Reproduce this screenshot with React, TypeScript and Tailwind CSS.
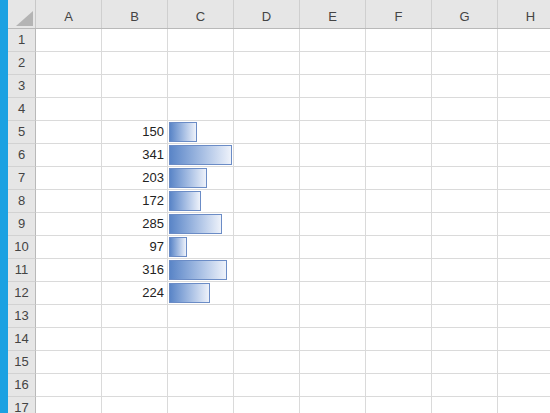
const cols = ['A', 'B', 'C', 'D', 'E', 'F', 'G', 'H']
const rows = Array.from({ length: 17 }, (_, i) => i + 1)

// values in column B, shown again as data bars in column C
const data: Record<number, number> = {
  5: 150,
  6: 341,
  7: 203,
  8: 172,
  9: 285,
  10: 97,
  11: 316,
  12: 224,
}
const max = 341

const font = { fontFamily: '"Liberation Sans", Arial, sans-serif' }

const DataBar = ({ value }: { value: number }) => (
  <div
    className="ml-[1px] h-[20px] border border-[#6b8cc6] bg-gradient-to-r from-[#5a85c7] to-[#eef2fa]"
    style={{ width: `${Math.round((value / max) * 63)}px` }}
  />
)

const App = () => {
  return (
    <div
      className="flex w-[550px] h-[413px] overflow-hidden bg-white text-[#333]"
      style={font}
    >
      <div className="w-[8px] shrink-0 bg-[#1ba1e2]" />

      <div className="flex flex-col shrink-0">
        <div className="flex h-[29px] shrink-0 bg-[#e6e6e6] border-b border-[#b9b9b9]">
          <div className="relative w-[28px] shrink-0 border-r border-[#c8c8c8]">
            <div className="absolute right-[2px] bottom-[2px] w-0 h-0 border-l-[17px] border-l-transparent border-b-[15px] border-b-[#b4b4b4]" />
          </div>
          {cols.map((c) => (
            <div
              key={c}
              className="w-[66px] shrink-0 flex items-end justify-center pb-[5px] text-[13px] leading-none text-[#444] border-r border-[#cfcfcf]"
            >
              {c}
            </div>
          ))}
        </div>

        {rows.map((r) => (
          <div key={r} className="flex h-[23px] shrink-0">
            <div className="w-[28px] shrink-0 flex items-center justify-center text-[13px] text-[#444] bg-[#e6e6e6] border-r border-b border-r-[#b9b9b9] border-b-[#d2d2d2]">
              {r}
            </div>
            {cols.map((c) => (
              <div
                key={c}
                className="w-[66px] shrink-0 flex items-center border-r border-b border-[#dadada]"
              >
                {c === 'B' && data[r] !== undefined && (
                  <span className="ml-auto pr-[3px] text-[13px] text-[#222]">
                    {data[r]}
                  </span>
                )}
                {c === 'C' && data[r] !== undefined && (
                  <DataBar value={data[r]} />
                )}
              </div>
            ))}
          </div>
        ))}
      </div>
    </div>
  )
}

export default App
